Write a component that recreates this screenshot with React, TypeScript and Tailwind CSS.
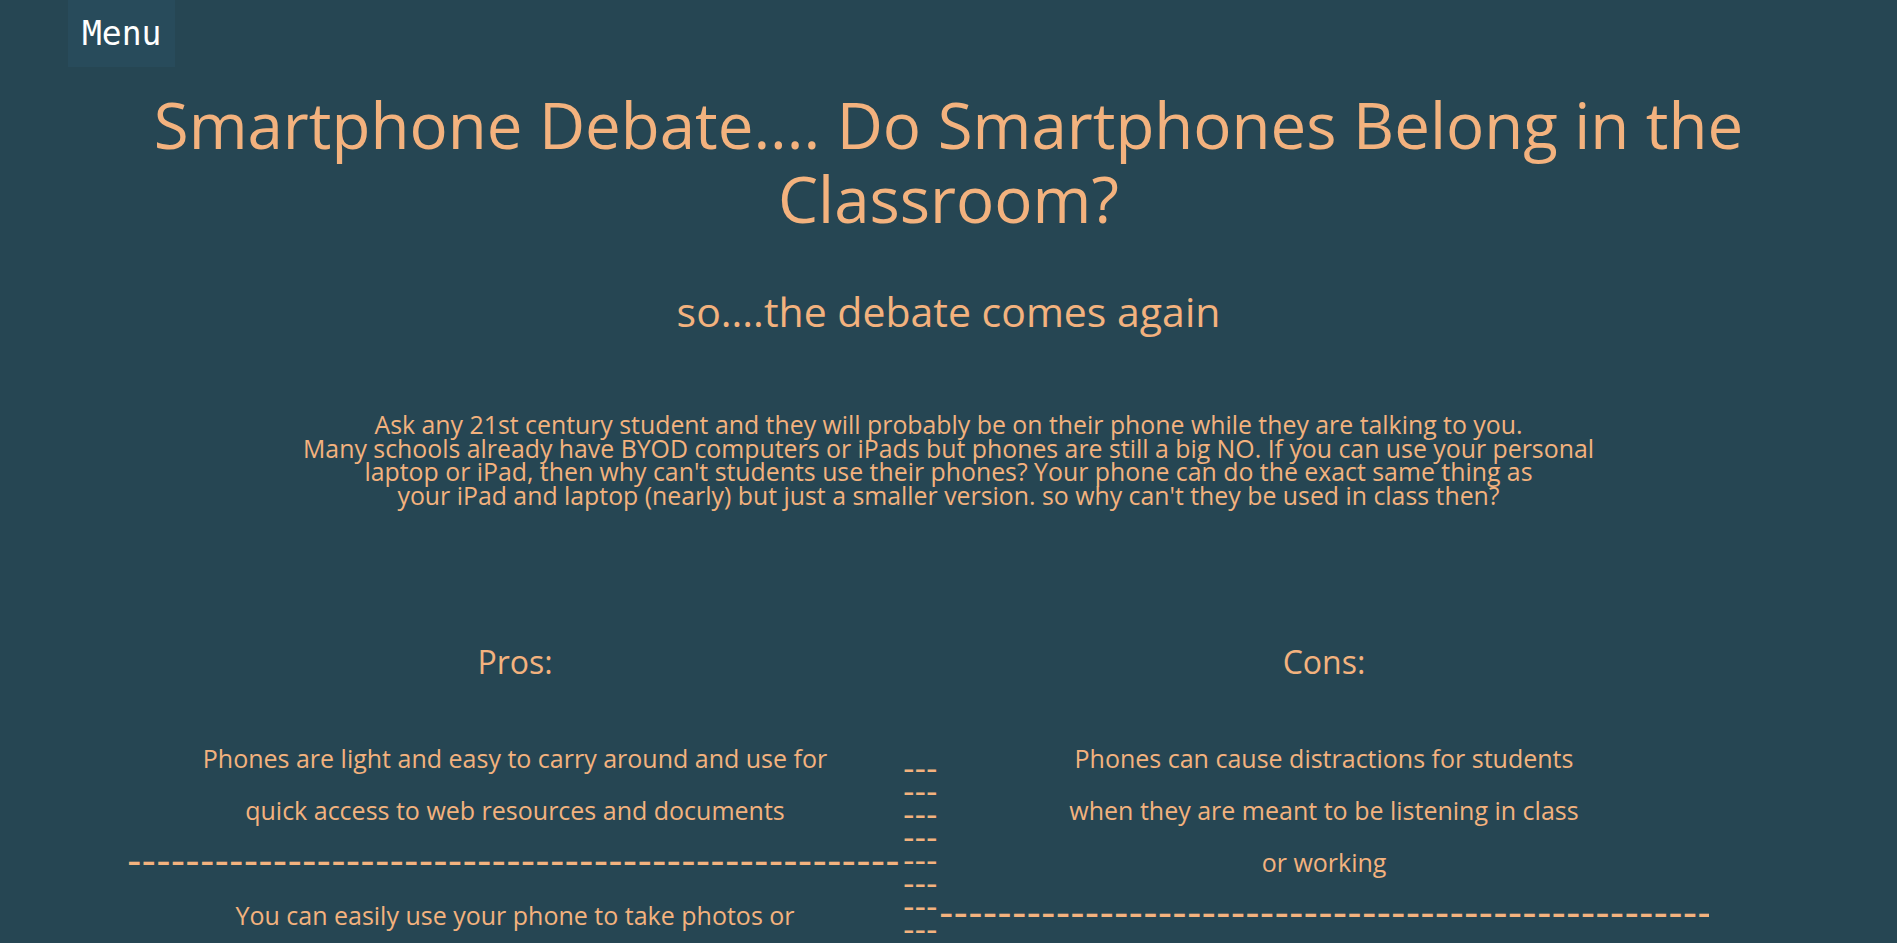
const pros = [
  ["Phones are light and easy to carry around and use for", "quick access to web resources and documents"],
  ["You can easily use your phone to take photos or", "record videos for your school work"],
];

const cons = [
  ["Phones can cause distractions for students", "when they are meant to be listening in class", "or working"],
  ["Phones can be used to cheat on tests", "and quizzes"],
];

function Dashes({ count }: { count: number }) {
  return (
    <div className="mt-[5px] h-[40px] overflow-hidden whitespace-nowrap font-['DejaVu_Sans',sans-serif] text-[40px] leading-[40px] tracking-[0.15px]">
      {"-".repeat(count)}
    </div>
  );
}

function Column({ title, items, dashCount, width }: { title: string; items: string[][]; dashCount: number; width: string }) {
  return (
    <div className={`flex flex-col ${width}`}>
      <h3 className="text-center text-[32px] leading-[40px]">{title}</h3>
      <div className="mt-[50px] flex flex-col gap-[8px]">
        {items.map((lines, i) => (
          <div key={i}>
            <p className="text-center text-[25px] leading-[52px]">
              {lines.map((l, j) => (
                <span key={j} className="block">
                  {l}
                </span>
              ))}
            </p>
            <Dashes count={dashCount} />
          </div>
        ))}
      </div>
    </div>
  );
}

export default function App() {
  return (
    <div className="min-h-screen bg-[#264653] pb-20 font-['Open_Sans',sans-serif] text-[#f3b27e]">
      {/* top menu */}
      <nav className="pl-[68px]">
        <div className="inline-flex h-[67px] items-center bg-[#284b5b] px-[14px] font-['DejaVu_Sans_Mono',monospace] text-[33px] text-white">
          Menu
        </div>
      </nav>

      <h1 className="mt-[21px] text-center text-[63.6px] leading-[74px] font-normal">
        Smartphone Debate.... Do Smartphones Belong in the
        <br />
        Classroom?
      </h1>

      <h2 className="mt-[51px] text-center text-[41px] leading-[48px]">so....the debate comes again</h2>

      <p className="mt-[78px] text-center text-[24.85px] leading-[23.7px] whitespace-nowrap">
        Ask any 21st century student and they will probably be on their phone while they are talking to you.
        <br />
        Many schools already have BYOD computers or iPads but phones are still a big NO. If you can use your personal
        <br />
        laptop or iPad, then why can't students use their phones? Your phone can do the exact same thing as
        <br />
        your iPad and laptop (nearly) but just a smaller version. so why can't they be used in class then?
      </p>

      <div className="mt-[134px] ml-[127px] flex items-start">
        <Column title="Pros:" items={pros} dashCount={53} width="w-[776px]" />

        {/* divider column */}
        <div className="mt-[116px] flex w-[36px] flex-col font-['DejaVu_Sans',sans-serif] text-[32px] leading-[23px]">
          {Array.from({ length: 14 }).map((_, i) => (
            <div key={i} className="whitespace-nowrap">
              ---
            </div>
          ))}
        </div>

        <Column title="Cons:" items={cons} dashCount={53} width="w-[770px]" />
      </div>
    </div>
  );
}
